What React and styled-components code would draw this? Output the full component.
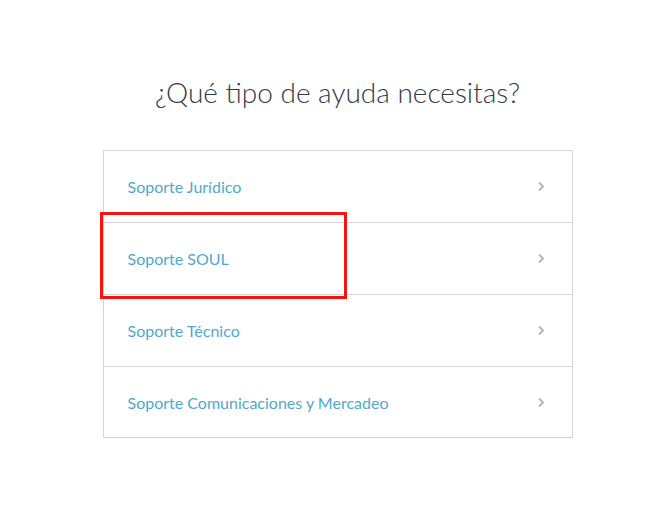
import styled, { createGlobalStyle } from 'styled-components';

const GlobalStyle = createGlobalStyle`
	body {
		margin: 0;
		background: #fff;
		font-family: Lato, 'Open Sans', sans-serif;
	}
`;

const Page = styled.div`
	width: 665px;
	height: 531px;
	display: flex;
	flex-direction: column;
	align-items: center;
	padding: 74px 0 0 10px;
	box-sizing: border-box;
`;

const Title = styled.h1`
	margin: 0 0 40px;
	font-size: 28px;
	font-weight: 300;
	color: #333a44;
	line-height: 36px;
`;

const Menu = styled.ul`
	position: relative;
	list-style: none;
	margin: 0;
	padding: 0;
	width: 470px;
	border: 1px solid #d5d5d5;
	box-sizing: border-box;
`;

const Item = styled.li`
	display: flex;
	align-items: center;
	justify-content: space-between;
	height: ${(p) => p.h}px;
	padding: 0 27px 0 24px;
	border-top: ${(p) => (p.first ? 'none' : '1px solid #d5d5d5')};
	box-sizing: border-box;
	color: #50a9cb;
	font-size: 16px;
	cursor: pointer;
`;

const Highlight = styled.div`
	position: absolute;
	left: -4px;
	top: 61px;
	width: 247px;
	height: 87px;
	border: 3px solid #f8130f;
	box-sizing: border-box;
	pointer-events: none;
`;

const Chevron = () => (
	<svg width="8" height="11" viewBox="0 0 8 11">
		<path d="M2 1.5 L6 5.5 L2 9.5" fill="none" stroke="#b0b6bc" strokeWidth="1.8" />
	</svg>
);

const items = [
	{ label: 'Soporte Jurídico', h: 71 },
	{ label: 'Soporte SOUL', h: 72 },
	{ label: 'Soporte Técnico', h: 72 },
	{ label: 'Soporte Comunicaciones y Mercadeo', h: 71 },
];

export default function App() {
	return (
		<>
			<GlobalStyle />
			<Page>
				<Title>¿Qué tipo de ayuda necesitas?</Title>
				<Menu>
					{items.map((item, i) => (
						<Item key={item.label} h={item.h} first={i === 0}>
							<span>{item.label}</span>
							<Chevron />
						</Item>
					))}
					<Highlight />
				</Menu>
			</Page>
		</>
	);
}
